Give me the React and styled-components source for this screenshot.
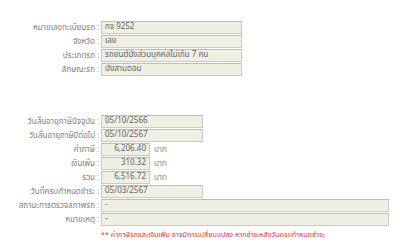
import React from 'react'
import { styled, createGlobalStyle } from 'styled-components'

const GlobalStyle = createGlobalStyle`
  body {
    margin: 0;
    background: #ffffff;
    font-family: Tahoma, "Noto Sans Thai", "Noto Sans", "DejaVu Sans", sans-serif;
  }
`;

const Page = styled.div`
  width: 400px;
  height: 250px;
  padding-top: 21px;
  box-sizing: border-box;
  overflow: hidden;
`;

const Section = styled.div`
  display: flex;
  flex-direction: column;
  gap: 1px;
  margin-top: ${p => p.$top || 0}px;
`;

const Row = styled.div`
  display: flex;
  align-items: center;
  height: 13px;
`;

const Label = styled.div`
  width: 95px;
  text-align: right;
  font-size: 8px;
  color: #808080;
  white-space: nowrap;
`;

const Colon = styled.div`
  width: 6px;
  text-align: center;
  font-size: 8px;
  color: #999;
`;

const Field = styled.div`
  width: ${p => p.$w}px;
  height: 13px;
  box-sizing: border-box;
  border: 1px solid #cacaca;
  border-top-color: #bcbcbc;
  background: #efefe4;
  font-size: 8px;
  line-height: 11px;
  color: #666;
  padding: 0 3px;
  text-align: ${p => (p.$right ? 'right' : 'left')};
  white-space: nowrap;
  overflow: hidden;
`;

const Unit = styled.span`
  margin-left: 4px;
  font-size: 8px;
  color: #888;
`;

const Note = styled.div`
  margin: 3px 0 0 101px;
  font-size: 7.2px;
  color: #d0383c;
  white-space: nowrap;
`;

const Line = ({ label, value, w = 141, right, unit }) => (
  <Row>
    <Label>{label}</Label>
    <Colon>:</Colon>
    <Field $w={w} $right={right}>{value}</Field>
    {unit && <Unit>{unit}</Unit>}
  </Row>
)

export default function App() {
  return (
    <Page>
      <GlobalStyle />
      <Section>
        <Line label="หมายเลขทะเบียนรถ" value="กจ 9252" />
        <Line label="จังหวัด" value="เลย" />
        <Line label="ประเภทรถ" value="รถยนต์นั่งส่วนบุคคลไม่เกิน 7 คน" />
        <Line label="ลักษณะรถ" value="นั่งสามตอน" />
      </Section>
      <Section $top={39}>
        <Line label="วันสิ้นอายุภาษีปัจจุบัน" value="05/10/2566" w={102} />
        <Line label="วันสิ้นอายุภาษีปีต่อไป" value="05/10/2567" w={102} />
        <Line label="ค่าภาษี" value="6,206.40" w={49} right unit="บาท" />
        <Line label="เงินเพิ่ม" value="310.32" w={49} right unit="บาท" />
        <Line label="รวม" value="6,516.72" w={49} right unit="บาท" />
        <Line label="วันที่ครบกำหนดชำระ" value="05/03/2567" w={102} />
        <Line label="สถานะการตรวจสภาพรถ" value="-" w={288} />
        <Line label="หมายเหตุ" value="-" w={288} />
      </Section>
      <Note>** ค่าภาษีรถและเงินเพิ่ม อาจมีการเปลี่ยนแปลง หากชำระหลังวันครบกำหนดชำระ</Note>
    </Page>
  )
}
